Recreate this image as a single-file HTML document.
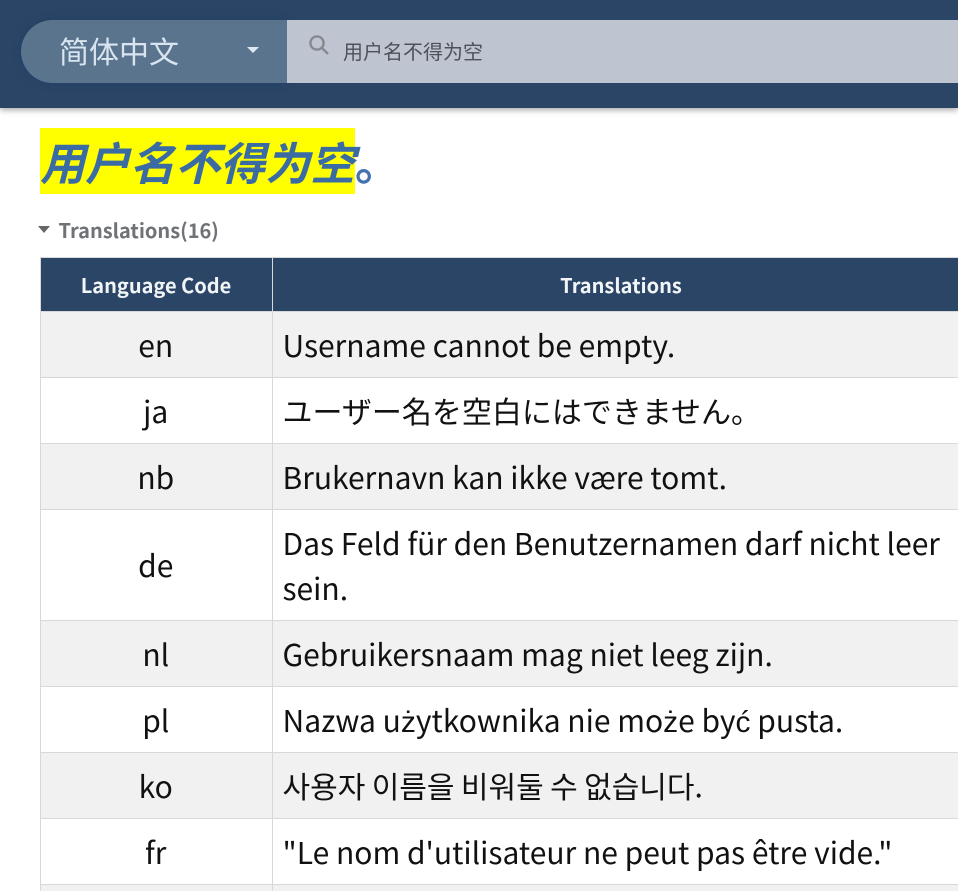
<!DOCTYPE html>
<html><head><meta charset="utf-8">
<style>
html,body{margin:0;padding:0;width:958px;height:891px;overflow:hidden;background:#fff;font-family:"Noto Sans CJK SC","Liberation Sans",sans-serif;}
*{box-sizing:border-box}
.wrap{position:absolute;left:0;top:0;width:958px;height:891px;overflow:hidden;}
.bar{position:absolute;left:0;top:0;width:958px;height:108px;background:#2b4566;box-shadow:0 2px 6px rgba(0,0,0,.35);}
.sel{position:absolute;left:21px;top:20px;width:266px;height:63px;background:#5b748e;border-radius:32px 0 0 32px;box-shadow:0 0 8px rgba(20,60,100,.5);}
.sel span{position:absolute;left:38px;top:9px;font-size:30px;line-height:43px;color:#d8e4f0;}
.caret{position:absolute;left:226px;top:27px;width:0;height:0;border-left:6px solid transparent;border-right:6px solid transparent;border-top:6px solid #dde8f3;}
.inp{position:absolute;left:287px;top:20px;width:671px;height:63px;background:#bfc5d0;}
.inp span{position:absolute;left:56px;top:16px;font-size:20px;line-height:29px;color:#4d5159;}
.inp svg{position:absolute;left:21px;top:14px;}
.title{position:absolute;left:40px;top:128px;height:66px;font-size:45px;line-height:66px;font-weight:700;font-style:italic;color:#3a6ca3;white-space:nowrap;}
.title b{background:#ff0;font-weight:700;display:inline-block;height:66px;}
.title i{font-style:normal;color:#4472b0;}
.sum{position:absolute;left:58.5px;top:215px;font-size:20px;line-height:30px;font-weight:700;color:#6f7276;white-space:nowrap;}
.tri{position:absolute;left:38px;top:226px;width:0;height:0;border-left:6.5px solid transparent;border-right:6.5px solid transparent;border-top:7px solid #666;}
table{position:absolute;left:40px;top:257px;border-collapse:collapse;table-layout:fixed;width:930px;}
th{background:#2b4566;color:#f2f5f8;font-size:20px;line-height:30px;font-weight:700;padding:12px 10px 11px;border:1px solid #d8d8d8;text-align:center;}
th:first-child{padding-right:11px;}
td{font-size:30px;line-height:45px;padding:10px 10px 10px 9.5px;border:1px solid #d8d8d8;color:#111;}
td:first-child{text-align:center;padding-right:11px;}
tr.g td{background:#f1f1f1;}
tr.end td{padding:0;height:6px;line-height:0;font-size:0;border-bottom:0;}
.lf{font-family:"Liberation Sans",sans-serif;line-height:0;}
</style></head><body>
<div class="wrap">
<div class="bar"></div>
<div class="sel"><span>简体中文</span><i class="caret"></i></div>
<div class="inp"><svg width="22" height="22" viewBox="0 0 22 22" fill="none" stroke="#85898f" stroke-width="2.4"><circle cx="9" cy="9" r="6.6"/><path d="M14 14l6 6"/></svg><span>用户名不得为空</span></div>
<div class="title"><b>用户名不得为空</b><i>。</i></div>
<i class="tri"></i><div class="sum">Translations(16)</div>
<table>
<colgroup><col style="width:232px"><col></colgroup>
<tr><th>Language Code</th><th>Translations</th></tr>
<tr class="g"><td>en</td><td>Username cannot be empty.</td></tr>
<tr><td>ja</td><td lang="ja" style="font-family:'Noto Sans CJK JP',sans-serif">ユーザー名を空白にはできません。</td></tr>
<tr class="g"><td>nb</td><td>Brukernavn kan ikke være tomt.</td></tr>
<tr><td style="padding-top:9px;padding-bottom:11px">de</td><td>Das Feld für den Benutzernamen darf nicht leer<br>sein.</td></tr>
<tr class="g"><td>nl</td><td>Gebruikersnaam mag niet leeg zijn.</td></tr>
<tr><td>pl</td><td>Nazwa u<span class="lf">ż</span>ytkownika nie mo<span class="lf">ż</span>e by<span class="lf">ć</span> pusta.</td></tr>
<tr class="g"><td>ko</td><td lang="ko" style="font-family:'Noto Sans CJK KR',sans-serif;word-spacing:-2px">사용자 이름을 비워둘 수 없습니다.</td></tr>
<tr><td>fr</td><td>"Le nom d'utilisateur ne peut pas être vide."</td></tr>
<tr class="g end"><td></td><td></td></tr>
</table>
</div>
</body></html>
